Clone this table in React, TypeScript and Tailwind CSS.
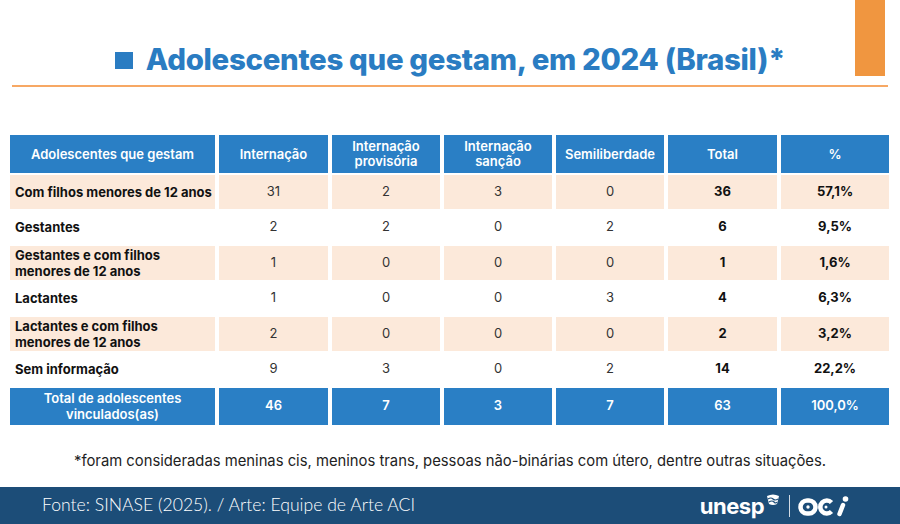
import React from "react";

type Row = {
  label: string[];
  values: string[];
  shaded: boolean;
};

const HEAD = [
  ["Adolescentes que gestam"],
  ["Internação"],
  ["Internação", "provisória"],
  ["Internação", "sanção"],
  ["Semiliberdade"],
  ["Total"],
  ["%"],
];

const ROWS: Row[] = [
  { label: ["Com filhos menores de 12 anos"], values: ["31", "2", "3", "0", "36", "57,1%"], shaded: true },
  { label: ["Gestantes"], values: ["2", "2", "0", "2", "6", "9,5%"], shaded: false },
  { label: ["Gestantes e com filhos", "menores de 12 anos"], values: ["1", "0", "0", "0", "1", "1,6%"], shaded: true },
  { label: ["Lactantes"], values: ["1", "0", "0", "3", "4", "6,3%"], shaded: false },
  { label: ["Lactantes e com filhos", "menores de 12 anos"], values: ["2", "0", "0", "0", "2", "3,2%"], shaded: true },
  { label: ["Sem informação"], values: ["9", "3", "0", "2", "14", "22,2%"], shaded: false },
];

const TOTAL = ["46", "7", "3", "7", "63", "100,0%"];

function Lines({ lines }: { lines: string[] }) {
  return (
    <>
      {lines.map((l, i) => (
        <span key={i} className="block">
          {l}
        </span>
      ))}
    </>
  );
}

// stylised unesp emblem + aci mark, drawn by hand
function Logos() {
  return (
    <div className="flex items-center">
      <span className="text-[22px] font-bold leading-none tracking-[-0.5px] text-white">unesp</span>
      <svg width="16" height="12" viewBox="0 0 16 12" className="-mt-[12px] ml-[1px]">
        <path d="M2 2 Q8 -1 14 2 L12 10 Q8 12 4 10 Z" fill="white" />
        <path d="M3 5 Q6 3 8 5 T13 5" stroke="#1c4d78" strokeWidth="1.2" fill="none" />
        <path d="M4 8 Q7 6 9 8 T12 8" stroke="#1c4d78" strokeWidth="1.2" fill="none" />
      </svg>
      <span className="mx-[8px] h-[22px] w-px bg-white/80" />
      <svg width="52" height="22" viewBox="0 0 52 22">
        <rect x="2.5" y="5.5" width="15" height="13" rx="6.5" stroke="white" strokeWidth="4.5" fill="none" />
        <circle cx="10" cy="12" r="1.7" fill="white" />
        <path d="M33.5 7.5 A6.5 6.5 0 1 0 33.5 16.5" stroke="white" strokeWidth="4.5" fill="none" />
        <circle cx="28" cy="12" r="1.5" fill="white" />
        <path d="M45 10 L41.5 19" stroke="white" strokeWidth="4.5" strokeLinecap="round" />
        <circle cx="47.5" cy="4" r="2.8" fill="white" />
      </svg>
    </div>
  );
}

export default function App() {
  return (
    <div
      className="relative flex h-[524px] w-[900px] flex-col overflow-hidden bg-white"
      style={{ fontFamily: "Inter, 'Noto Sans', sans-serif" }}
    >
      <div className="absolute left-[855px] top-0 h-[76px] w-[30px] bg-[#f09640]" />

      <h1 className="mt-[42px] flex h-[36px] items-center justify-center text-[29.4px] font-extrabold leading-[36px] tracking-[-0.3px] text-[#2a7cc2]">
        <span className="mr-[13px] inline-block h-[17px] w-[18px] bg-[#2a7cc2]" />
        Adolescentes que gestam, em 2024 (Brasil)*
      </h1>

      <div className="mx-[12px] mt-[7px] h-[2px] bg-[#f7a864]" />

      <div className="ml-[10px] mt-[48px] grid grid-cols-[205px_109px_108px_108px_108px_109px_108px] gap-x-[4px] gap-y-[1.5px] text-[13px]">
        {HEAD.map((h, i) => (
          <div
            key={i}
            className="flex h-[38px] items-center justify-center bg-[#2a7fc5] text-center font-semibold leading-[15px] text-white"
          >
            <div>
              <Lines lines={h} />
            </div>
          </div>
        ))}

        {ROWS.map((r, ri) => (
          <React.Fragment key={ri}>
            <div
              className={`flex h-[34px] items-center pl-[5px] font-bold leading-[16px] text-[#111] ${
                r.shaded ? "bg-[#fce9da]" : "bg-white"
              }`}
            >
              <div>
                <Lines lines={r.label} />
              </div>
            </div>
            {r.values.map((v, vi) => (
              <div
                key={vi}
                className={`flex h-[34px] items-center justify-center ${
                  vi >= 4 ? "font-bold text-[#111]" : "text-[#333]"
                } ${r.shaded ? "bg-[#fce9da]" : "bg-white"}`}
              >
                {v}
              </div>
            ))}
          </React.Fragment>
        ))}

        <div className="flex h-[37px] items-center justify-center bg-[#2a7fc5] text-center font-semibold leading-[16px] text-white">
          <div>
            <Lines lines={["Total de adolescentes", "vinculados(as)"]} />
          </div>
        </div>
        {TOTAL.map((v, i) => (
          <div
            key={i}
            className="flex h-[37px] items-center justify-center bg-[#2a7fc5] font-semibold text-white"
          >
            {v}
          </div>
        ))}
      </div>

      <p className="mt-[26px] text-center text-[14.8px] leading-[20px] text-[#222]">
        *foram consideradas meninas cis, meninos trans, pessoas não-binárias com útero, dentre outras situações.
      </p>

      <footer className="mt-auto flex h-[37px] items-center justify-between bg-[#1c4d78] pl-[42px] pr-[50px]">
        <span
          className="text-[17.6px] font-light text-white"
          style={{ fontFamily: "Lato, 'Open Sans', sans-serif" }}
        >
          Fonte: SINASE (2025). / Arte: Equipe de Arte ACI
        </span>
        <Logos />
      </footer>
    </div>
  );
}
